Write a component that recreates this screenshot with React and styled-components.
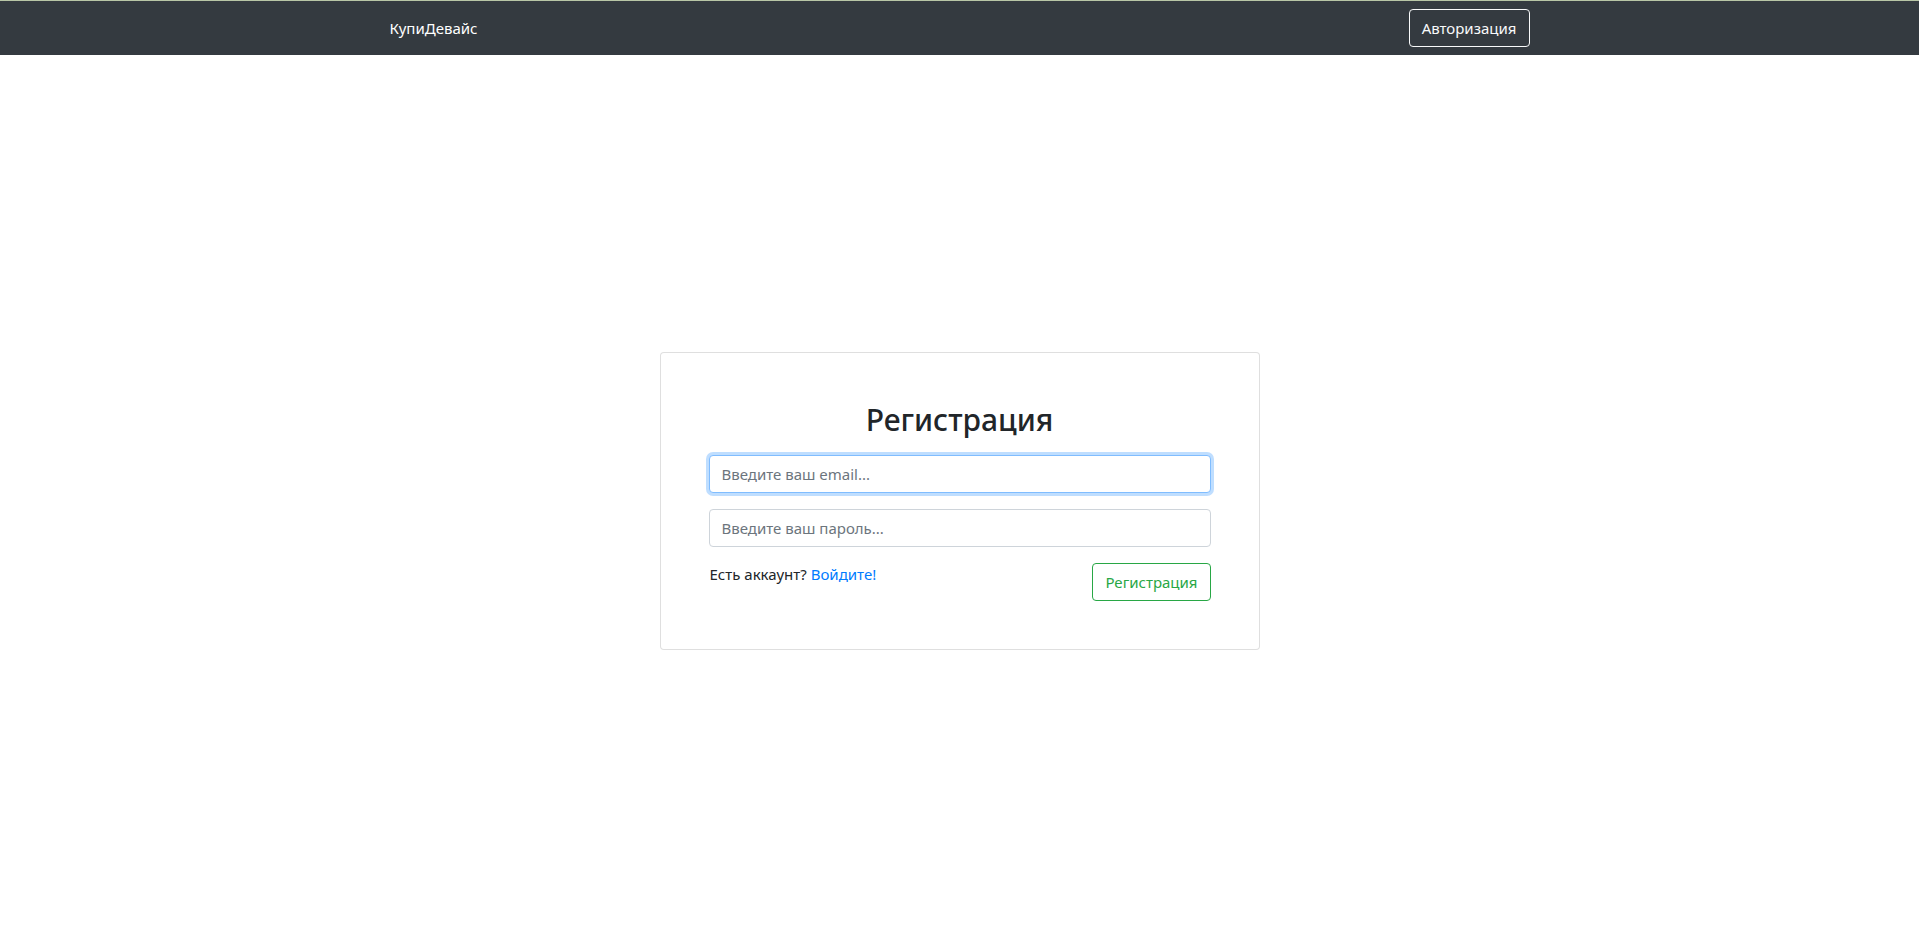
import styled, { createGlobalStyle } from 'styled-components';

const GlobalStyle = createGlobalStyle`
  * {
    box-sizing: border-box;
  }
  body {
    margin: 0;
    font-family: "Noto Sans", "Open Sans", sans-serif;
    font-size: 16px;
    line-height: 1.5;
    color: #212529;
    background: #fff;
  }
`;

const Navbar = styled.nav`
  background-color: #343a40;
  border-top: 1px solid #b8c6a6;
  padding: 8px 0;
`;

const NavContainer = styled.div`
  width: 1140px;
  margin: 0 auto;
  display: flex;
  align-items: center;
  justify-content: space-between;
`;

const Brand = styled.a`
  color: #fff;
  text-decoration: none;
  font-size: 15px;
  cursor: pointer;
`;

const OutlineButton = styled.button`
  font-family: inherit;
  font-size: 15px;
  line-height: 24px;
  padding: 6px 12px;
  border-radius: 4px;
  background: transparent;
  cursor: pointer;
  border: 1px solid ${p => p.$color};
  color: ${p => p.$color};
`;

const Main = styled.div`
  height: calc(100vh - 55px);
  display: flex;
  justify-content: center;
  align-items: center;
`;

const Card = styled.div`
  width: 600px;
  padding: 48px;
  border: 1px solid rgba(0, 0, 0, 0.125);
  border-radius: 4px;
  background: #fff;
`;

const Title = styled.h2`
  margin: 0;
  text-align: center;
  font-size: 30px;
  font-weight: 500;
  line-height: 38px;
  color: #212529;
`;

const Form = styled.form`
  display: flex;
  flex-direction: column;
`;

const Input = styled.input`
  margin-top: 16px;
  height: 38px;
  padding: 6px 12px;
  font-family: inherit;
  font-size: 15px;
  color: #495057;
  border: 1px solid ${p => (p.$focused ? '#80bdff' : '#ced4da')};
  border-radius: 4px;
  outline: none;
  box-shadow: ${p => (p.$focused ? '0 0 0 3px rgba(0, 123, 255, 0.25)' : 'none')};
  &::placeholder {
    color: #6c757d;
  }
`;

const Row = styled.div`
  margin-top: 16px;
  display: flex;
  justify-content: space-between;
  align-items: flex-start;
`;

const Hint = styled.div`
  font-size: 15px;
  padding-left: 1px;
`;

const Link = styled.a`
  color: #007bff;
  text-decoration: none;
  cursor: pointer;
`;

export default function App() {
  return (
    <>
      <GlobalStyle />
      <Navbar>
        <NavContainer>
          <Brand>КупиДевайс</Brand>
          <OutlineButton $color="#f8f9fa">Авторизация</OutlineButton>
        </NavContainer>
      </Navbar>
      <Main>
        <Card>
          <Title>Регистрация</Title>
          <Form onSubmit={e => e.preventDefault()}>
            <Input $focused placeholder="Введите ваш email..." />
            <Input type="password" placeholder="Введите ваш пароль..." />
            <Row>
              <Hint>
                Есть аккаунт? <Link>Войдите!</Link>
              </Hint>
              <OutlineButton $color="#28a745">Регистрация</OutlineButton>
            </Row>
          </Form>
        </Card>
      </Main>
    </>
  );
}
